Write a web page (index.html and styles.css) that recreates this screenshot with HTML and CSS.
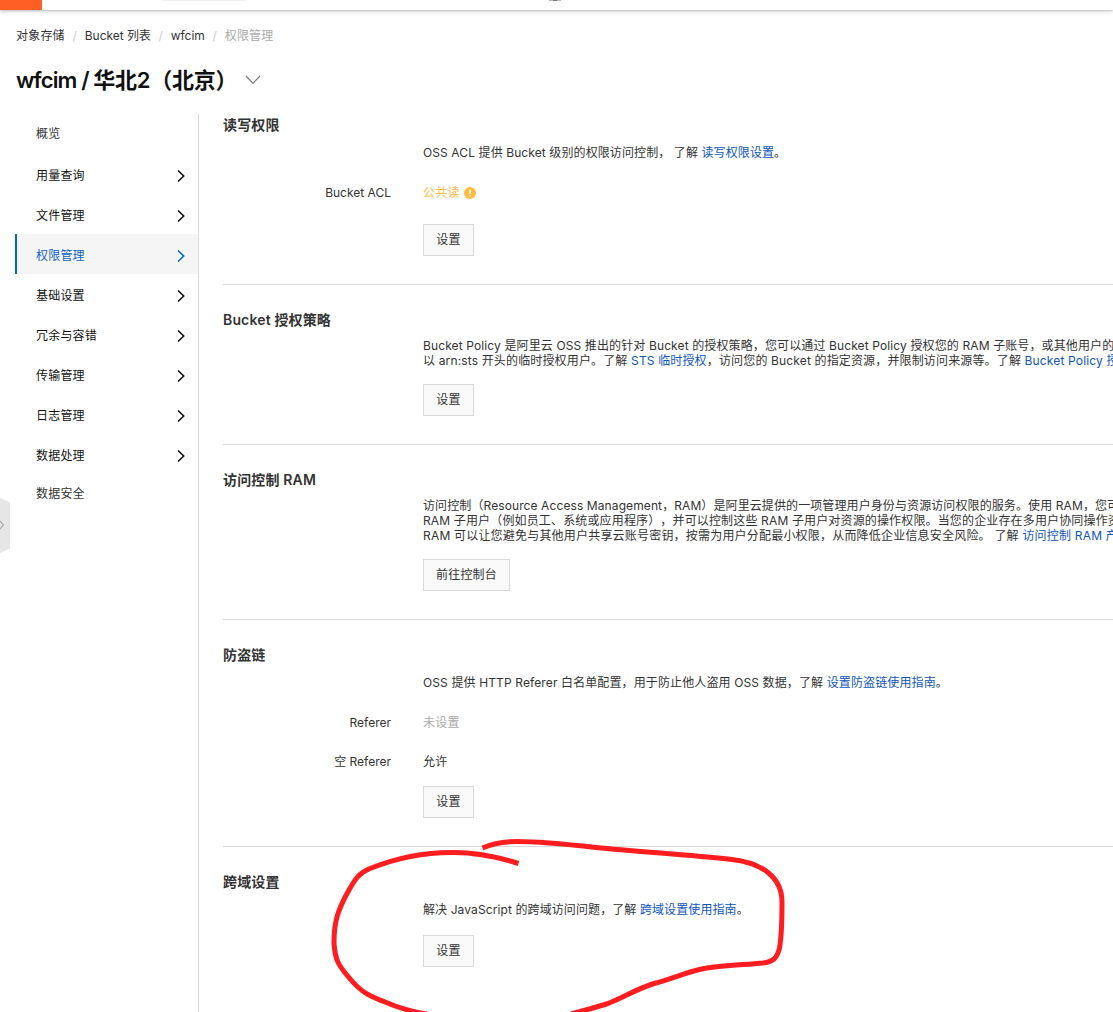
FILE: index.html
```html
<!DOCTYPE html>
<html lang="zh-CN">
<head>
<meta charset="utf-8">
<title>权限管理</title>
<link rel="stylesheet" href="styles.css">
</head>
<body>
<svg class="symbols" width="0" height="0"><symbol id="arrow" viewBox="0 0 8 14"><path d="M1 1.5 6.7 7 1 12.5" fill="none" stroke="currentColor" stroke-width="1.6"/></symbol></svg>
<div class="page">
  <header class="topbar"><div class="logo"></div><div class="search"></div><div class="mark"></div></header>
  <nav class="crumbs"><span>对象存储</span><i>/</i><span class="latin">Bucket 列表</span><i>/</i><span class="latin">wfcim</span><i>/</i><span class="current">权限管理</span></nav>
  <h1 class="title"><span><span class="bucket">wfcim / </span>华北2（北京）</span><svg width="16" height="10" viewBox="0 0 16 10"><path d="M1 1l7 7.3L15 1" fill="none" stroke="#777" stroke-width="1.2"/></svg></h1>
  <div class="body">
    <ul class="menu">
      <li class="leaf">概览</li>
      <li>用量查询<svg><use href="#arrow"/></svg></li>
      <li>文件管理<svg><use href="#arrow"/></svg></li>
      <li class="active">权限管理<svg><use href="#arrow"/></svg></li>
      <li>基础设置<svg><use href="#arrow"/></svg></li>
      <li>冗余与容错<svg><use href="#arrow"/></svg></li>
      <li>传输管理<svg><use href="#arrow"/></svg></li>
      <li>日志管理<svg><use href="#arrow"/></svg></li>
      <li>数据处理<svg><use href="#arrow"/></svg></li>
      <li class="leaf">数据安全</li>
    </ul>
    <main class="content">
      <section class="first">
        <h2>读写权限</h2>
        <div class="desc single"><p class="t-10">OSS ACL 提供 Bucket 级别的权限访问控制， 了解 <a>读写权限设置</a>。</p></div>
        <div class="row"><label>Bucket ACL</label><span class="warn">公共读<svg width="12" height="12" viewBox="0 0 12 12"><circle cx="6" cy="6" r="6" fill="#ffba42"/><path d="M6 2.5v4.3M6 8v1.5" stroke="#fff" stroke-width="1.5"/></svg></span></div>
        <button class="gap-24">设置</button>
      </section>
      <section>
        <h2>Bucket 授权策略</h2>
        <div class="desc"><p class="t-12">Bucket Policy 是阿里云 OSS 推出的针对 Bucket 的授权策略，您可以通过 Bucket Policy 授权您的 RAM 子账号，或其他用户的</p><p class="t-15">以 arn:sts 开头的临时授权用户。了解 <a>STS 临时授权</a>，访问您的 Bucket 的指定资源，并限制访问来源等。了解 <a>Bucket Policy 授</a></p></div>
        <button>设置</button>
      </section>
      <section>
        <h2>访问控制 RAM</h2>
        <div class="desc"><p class="t-10">访问控制（Resource Access Management，RAM）是阿里云提供的一项管理用户身份与资源访问权限的服务。使用 RAM，您可</p><p class="t-15">RAM 子用户（例如员工、系统或应用程序），并可以控制这些 RAM 子用户对资源的操作权限。当您的企业存在多用户协同操作资</p><p>RAM 可以让您避免与其他用户共享云账号密钥，按需为用户分配最小权限，从而降低企业信息安全风险。 了解 <a>访问控制 RAM 产</a></p></div>
        <button>前往控制台</button>
      </section>
      <section>
        <h2>防盗链</h2>
        <div class="desc single"><p class="t-12">OSS 提供 HTTP Referer 白名单配置，用于防止他人盗用 OSS 数据，了解 <a>设置防盗链使用指南</a>。</p></div>
        <div class="row"><label>Referer</label><span class="muted">未设置</span></div>
        <div class="row tight"><label>空 Referer</label><span>允许</span></div>
        <button class="gap-17">设置</button>
      </section>
      <section>
        <h2>跨域设置</h2>
        <div class="desc single"><p class="t-10">解决 JavaScript 的跨域访问问题，了解 <a>跨域设置使用指南</a>。</p></div>
        <button class="gap-18">设置</button>
      </section>
    </main>
  </div>
  <svg class="drawer" width="10" height="56" viewBox="0 0 10 56"><path d="M0 0l10 4.500v46L0 55z" fill="#e6e6e6"/><path d="M-1 22l4.500 5-4.500 5" fill="none" stroke="#aaa" stroke-width="1.2"/></svg>
  <svg class="scribble" width="480" height="182" viewBox="0 0 480 182"><g fill="none" stroke="#ff1d20" stroke-width="5"><path d="M162.500 18C174 13 184 11.500 197 11.500C222 11.500 249 14.500 276 17.500C320 22 368 24.500 412 29.500C442 33 462 47 462 72C462 92 462 104 459.500 118C457 129 452 132 443 133C420 135 399 136 384 138.500C366 142 352 149 334 153.500C314 160 303 168 288 173.500Q274 178 251 184"/><path d="M198.500 33.500C178 27 155 22 131 22.500C102 22.500 74 29 50 38.500C39 43 35 49 29 60C17 81 14 93 14 113C15 132 20 137 31 150C44 165 53 167 65 172Q86 181 107 184"/></g></svg>
</div>
</body>
</html>
```
FILE: styles.css
```css
* { box-sizing: border-box; }
body { margin: 0; background: #fff; color: #333; font: 12px/15px Inter, "Noto Sans CJK SC", sans-serif; letter-spacing: .2px; text-spacing-trim: space-all; }
.page { position: relative; width: 100%; height: 1012px; overflow: hidden; }
.symbols { position: absolute; }
.topbar { display: flex; height: 10px; box-shadow: 0 1px 2px rgba(0,0,0,.18), 0 2px 5px rgba(0,0,0,.1); }
.logo { width: 42px; height: 10px; background: #ff5f24; }
.search { width: 82px; height: 1px; margin-left: 121px; background: #eee; }
.mark { width: 12px; height: 1px; margin-left: 304px; background: linear-gradient(90deg, #bbb 4px, #777 4px 8px, #bbb 8px); }
.crumbs { display: flex; height: 50px; padding: 18px 16px 0; white-space: pre; }
.crumbs i { width: 20px; color: #ccc; text-align: center; font-style: normal; }
.crumbs .latin { letter-spacing: -.05px; }
.crumbs .current { color: #aaa; }
.title { display: flex; align-items: center; gap: 8px; height: 40px; margin: 0 0 14px; padding-left: 16px; color: #111; font-size: 22px; line-height: 40px; font-weight: 600; letter-spacing: -.25px; white-space: pre; }
.bucket { letter-spacing: -.88px; }
.body { display: flex; height: 898px; }
.menu { width: 199px; flex: none; margin: 0; padding: 0 0 0 15px; border-right: 1px solid #d9d9d9; list-style: none; color: #111; }
.menu li { display: flex; align-items: center; justify-content: space-between; height: 40px; padding: 2px 13px 0 21px; }
.menu .leaf { padding: 0 13px 2px 21px; color: #333; }
.menu svg { width: 8px; height: 14px; margin-top: 2px; }
.menu .active { padding-left: 19px; border-left: 2px solid #0064c8; background: #f5f5f5; color: #0f62c5; }
.content { flex: 1; min-width: 0; padding-left: 24px; overflow: hidden; }
section { padding: 25px 0 28px; border-bottom: 1px solid #d9d9d9; }
section.first { padding-top: 1px; }
section:last-child { border-bottom: 0; }
h2 { margin: 0; font-size: 14px; line-height: 20px; font-weight: 600; letter-spacing: .15px; }
.desc { margin: 8px 0 0 200px; white-space: nowrap; }
.desc.single { margin-top: 10px; }
p { margin: 0; height: 15px; }
.t-10 { letter-spacing: .1px; }
.t-12 { letter-spacing: .12px; }
.t-15 { letter-spacing: .15px; }
a { color: #0f55c0; }
.row { display: grid; grid-template-columns: 168px auto; gap: 32px; height: 15px; margin-top: 25px; }
.row.tight { margin-top: 24px; }
label { text-align: right; letter-spacing: 0; }
.warn { display: flex; align-items: center; gap: 4px; color: #ffba42; }
.muted { color: #aaa; }
button { display: block; height: 32px; min-width: 51px; margin: 16px 0 0 200px; padding: 0 12px 1px; border: 1px solid #d9d9d9; background: #f9f9f9; color: #333; font: inherit; letter-spacing: inherit; }
.gap-24 { margin-top: 24px; }
.gap-17 { margin-top: 17px; }
.gap-18 { margin-top: 18px; }
.drawer { position: absolute; left: 0; top: 498px; }
.scribble { position: absolute; left: 320px; top: 830px; }
```
